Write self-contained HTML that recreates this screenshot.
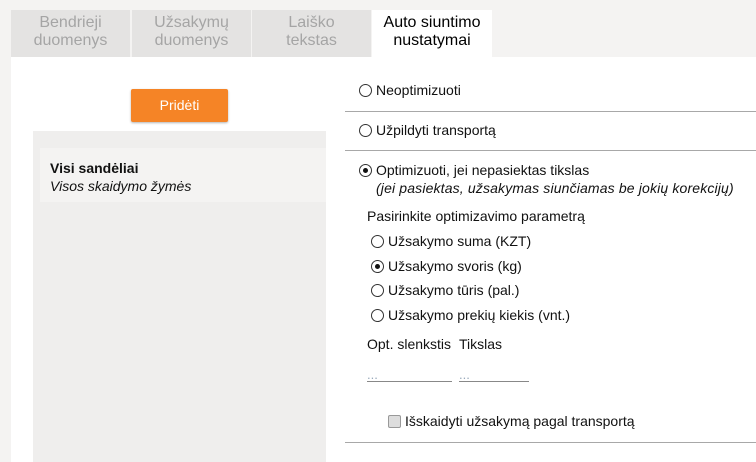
<html><head><style>
body{margin:0;width:756px;height:462px;background:#f4f3f2;font-family:"Liberation Sans",sans-serif;font-size:14px;color:#111;position:relative;overflow:hidden}
.a{position:absolute}
.tab{position:absolute;top:10px;height:47px;width:119px;background:#e4e3e2;color:#a5a5a5;text-align:center;font-size:16px;line-height:18px;padding-top:4px;box-sizing:border-box}
.r{display:inline-block;width:11px;height:11px;border:1px solid #333;border-radius:50%;vertical-align:-2px;margin-right:4px;position:relative;background:#fff}
.r.on:after{content:"";position:absolute;left:3px;top:3px;width:5px;height:5px;border-radius:50%;background:#111}
.ln{position:absolute;left:345px;right:0;height:1px;background:#a8a8a8}
</style></head><body>
<div class="tab" style="left:11px">Bendrieji<br>duomenys</div>
<div class="tab" style="left:132px">Užsakymų<br>duomenys</div>
<div class="tab" style="left:252px">Laiško<br>tekstas</div>
<div class="tab" style="left:372px;width:120px;background:#fff;color:#000">Auto siuntimo<br>nustatymai</div>
<div class="a" style="left:11px;top:57px;right:0;bottom:0;background:#fff"></div>
<div class="a" style="left:131px;top:89px;width:97px;height:33px;background:#f58426;border-radius:2px;box-shadow:0 1px 2px rgba(0,0,0,.3);color:#fff;text-align:center;line-height:33px">Pridėti</div>
<div class="a" style="left:33px;top:131px;width:293px;bottom:0;background:#efeeed"></div>
<div class="a" style="left:40px;top:148px;width:286px;height:54px;background:#f4f3f2"></div>
<div class="a" style="left:50px;top:159px;line-height:18px"><b>Visi sandėliai</b><br><i>Visos skaidymo žymės</i></div>
<div class="a" style="left:330px;top:70px;right:0;bottom:0;background:#fff;border-top-left-radius:10px"></div>
<div class="a" style="left:359px;top:82px"><span class="r"></span>Neoptimizuoti</div>
<div class="ln" style="top:111px"></div>
<div class="a" style="left:359px;top:122px"><span class="r"></span>Užpildyti transportą</div>
<div class="ln" style="top:150px"></div>
<div class="a" style="left:359px;top:161px;line-height:18px"><span class="r on"></span>Optimizuoti, jei nepasiektas tikslas<br><i style="padding-left:17px;letter-spacing:0.15px">(jei pasiektas, užsakymas siunčiamas be jokių korekcijų)</i></div>
<div class="a" style="left:367px;top:208px">Pasirinkite optimizavimo parametrą</div>
<div class="a" style="left:371px;top:233px"><span class="r"></span>Užsakymo suma (KZT)</div>
<div class="a" style="left:371px;top:258px"><span class="r on"></span>Užsakymo svoris (kg)</div>
<div class="a" style="left:371px;top:282px"><span class="r"></span>Užsakymo tūris (pal.)</div>
<div class="a" style="left:371px;top:307px"><span class="r"></span>Užsakymo prekių kiekis (vnt.)</div>
<div class="a" style="left:367px;top:336px">Opt. slenkstis</div>
<div class="a" style="left:459px;top:336px">Tikslas</div>
<div class="a" style="left:367px;top:362px;width:85px;height:20px;border-bottom:1px solid #888;color:#9ab;font-size:13px;line-height:26px;box-sizing:border-box">...</div>
<div class="a" style="left:459px;top:362px;width:70px;height:20px;border-bottom:1px solid #888;color:#9ab;font-size:13px;line-height:26px;box-sizing:border-box">...</div>
<div class="a" style="left:388px;top:413px"><span style="display:inline-block;width:11px;height:11px;border:1px solid #999;background:#ddd;border-radius:2px;vertical-align:-2px;margin-right:4px"></span>Išskaidyti užsakymą pagal transportą</div>
<div class="ln" style="top:442px"></div>
</body></html>
